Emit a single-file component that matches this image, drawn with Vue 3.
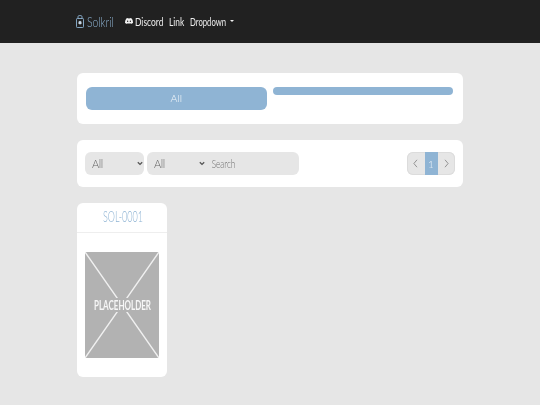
<script setup>
const chevron = "url(\"data:image/svg+xml,%3Csvg xmlns='http://www.w3.org/2000/svg' width='6' height='5' viewBox='0 0 6 5'%3E%3Cpath d='M.8 1.200 3 3.400l2.200-2.200' fill='none' stroke='%23555' stroke-width='1.300'/%3E%3C/svg%3E\")"
</script>

<template>
  <div class="page">
    <header class="nav">
      <a class="brand">
        <svg class="brand-icon" width="8" height="13" viewBox="0 0 8 13">
          <path d="M2 3.500V1.700C2 1 2.500.6 3.100.6h1.800C5.500.6 6 1 6 1.700v1.800" fill="none" stroke="#8fb4d4" stroke-width=".9"/>
          <rect x=".5" y="3.500" width="7" height="9" rx=".8" fill="none" stroke="#8fb4d4" stroke-width=".9"/>
          <path d="M4 5.800l1.500 1v1.400L4 9.700 2.500 8.200V6.800z" fill="#c8d8e6"/>
        </svg>
        <span class="squeeze brand-text">Solkril</span>
      </a>
      <a class="link discord">
        <svg width="8" height="6" viewBox="0 0 16 12">
          <path fill="#f2f2f2" d="M13.500 1A13 13 0 0 0 10.300 0l-.4.800a12 12 0 0 0-3.800 0L5.700 0A13 13 0 0 0 2.500 1C.4 4-.2 7 .1 10a13 13 0 0 0 4 2l.8-1.300-1.300-.6.300-.2a9.300 9.300 0 0 0 8.200 0l.3.200-1.300.6.800 1.300a13 13 0 0 0 4-2c.4-3.500-.6-6.500-2.400-9zM5.300 8.200c-.8 0-1.400-.7-1.400-1.600S4.500 5 5.300 5s1.500.7 1.400 1.600c0 .9-.6 1.600-1.400 1.600zm5.400 0c-.8 0-1.400-.7-1.400-1.600S9.900 5 10.700 5s1.500.7 1.400 1.600c0 .9-.6 1.600-1.400 1.600z"/>
        </svg>
        <span class="squeeze w-discord">Discord</span>
      </a>
      <a class="link"><span class="squeeze w-link">Link</span></a>
      <a class="link dropdown"><span class="squeeze w-drop">Dropdown</span><i class="caret"></i></a>
    </header>

    <main class="content">
      <section class="card tabs">
        <button class="tab tab-all">All</button>
        <button class="tab tab-empty"></button>
      </section>

      <section class="card filters">
        <select class="field sel sel-a" :style="{ backgroundImage: chevron }"><option>All</option></select>
        <div class="group">
          <select class="field sel sel-b" :style="{ backgroundImage: chevron }"><option>All</option></select>
          <div class="search-wrap">
            <input class="search" placeholder="Search" />
          </div>
        </div>
        <nav class="pager">
          <span class="pg">
            <svg width="5" height="9" viewBox="0 0 5 9"><path d="M4 .8.900 4.500 4 8.200" fill="none" stroke="#8a8a8a" stroke-width=".9"/></svg>
          </span>
          <span class="pg current">1</span>
          <span class="pg">
            <svg width="5" height="9" viewBox="0 0 5 9"><path d="M1 .8l3.100 3.700L1 8.200" fill="none" stroke="#8a8a8a" stroke-width=".9"/></svg>
          </span>
        </nav>
      </section>

      <article class="card item">
        <h3 class="item-title"><span class="squeeze w-title">SOL-0001</span></h3>
        <div class="item-body">
          <div class="ph">
            <svg class="ph-x" viewBox="0 0 74 106" preserveAspectRatio="none">
              <path d="M0 0L74 106M74 0L0 106" stroke="#f0f0f0" stroke-width="1.400" fill="none"/>
            </svg>
            <div class="ph-band"><span class="squeeze w-ph">PLACEHOLDER</span></div>
          </div>
        </div>
      </article>
    </main>
  </div>
</template>

<style>
html, body { margin: 0; overflow: hidden; background: #e6e6e6; }
</style>

<style scoped>
.page {
  width: 540px;
  height: 405px;
  background: #e6e6e6;
  font-family: "Lato", "Open Sans", sans-serif;
  font-weight: 300;
  overflow: hidden;
  filter: blur(.35px);
}
.squeeze {
  display: inline-block;
  white-space: nowrap;
  transform-origin: left center;
}
.nav {
  height: 43px;
  box-sizing: border-box;
  background: #212121;
  display: flex;
  align-items: center;
  padding: 0 0 1px 76px;
  color: #ededed;
  font-size: 11px;
  font-weight: 400;
}
.brand {
  display: flex;
  align-items: center;
  gap: 3px;
  color: #8fb4d4;
  margin-right: 11px;
}
.brand-text { width: 27px; font-size: 14px; font-weight: 300; transform: scaleX(.74); }
.link { margin-right: 7px; }
.discord { display: flex; align-items: center; gap: 2px; }
.w-discord { width: 27px; transform: scaleX(.77); }
.w-link { width: 14px; transform: scaleX(.76); }
.w-drop { width: 36px; transform: scaleX(.7); }
.dropdown { display: flex; align-items: center; }
.caret {
  width: 0;
  height: 0;
  margin-left: 4px;
  border-left: 2px solid transparent;
  border-right: 2px solid transparent;
  border-top: 2px solid #f0f0f0;
}
.content {
  width: 386px;
  margin-left: 77px;
  padding-top: 30px;
  display: flex;
  flex-direction: column;
  gap: 16px;
}
.card {
  background: #fff;
  border-radius: 6px;
  box-sizing: border-box;
}
.tabs {
  height: 51px;
  padding: 14px 10px 0 9px;
  display: flex;
  align-items: flex-start;
  gap: 6px;
}
.tab {
  flex: 1;
  border: 0;
  padding: 0 0 2px;
  background: #8fb4d4;
  color: #f4f8fb;
  font: inherit;
  font-size: 10.500px;
  border-radius: 6px;
}
.tab-all { height: 23px; }
.tab-empty { height: 8px; border-radius: 4px; padding: 0; }
.filters {
  height: 47px;
  padding: 0 8px;
  display: flex;
  align-items: center;
}
.field {
  box-sizing: border-box;
  height: 23px;
  border: 0;
  outline: 0;
  background: #e6e6e6;
  color: #666;
  font: inherit;
  font-size: 11px;
}
.sel {
  appearance: none;
  background-repeat: no-repeat;
  letter-spacing: -.4px;
}
.sel-a {
  width: 59px;
  padding-left: 7px;
  border-radius: 6px;
  margin-right: 3px;
  background-position: right 1px center;
}
.group { display: flex; }
.sel-b {
  width: 60px;
  padding-left: 7px;
  border-radius: 6px 0 0 6px;
  background-position: right 2px center;
}
.search-wrap {
  width: 92px;
  height: 23px;
  background: #e6e6e6;
  border-radius: 0 6px 6px 0;
  overflow: hidden;
}
.search {
  box-sizing: border-box;
  width: 135px;
  height: 23px;
  padding: 0 0 0 7px;
  border: 0;
  outline: 0;
  background: transparent;
  font: inherit;
  font-size: 12px;
  color: #6e6e6e;
  transform-origin: left center;
  transform: scaleX(.68);
}
.search::placeholder { color: #6e6e6e; opacity: 1; }
.pager {
  margin-left: auto;
  display: flex;
  height: 23px;
  width: 48px;
  border-radius: 6px;
  overflow: hidden;
  background: #e6e6e6;
  box-shadow: inset 0 0 0 1px #dcdcdc;
}
.pg {
  flex: 1;
  display: flex;
  align-items: center;
  justify-content: center;
  font-size: 10px;
}
.pg.current {
  flex: none;
  width: 13px;
  background: #8fb4d4;
  color: #eef4f9;
}
.item {
  width: 90px;
  height: 174px;
}
.item-title {
  margin: 0;
  height: 30px;
  padding-left: 26px;
  line-height: 26px;
  box-sizing: border-box;
  border-bottom: 1px solid #eeeeee;
  font-size: 15px;
  font-weight: 300;
  color: #8fb4d4;
}
.w-title { width: 39px; transform: scaleX(.6); }
.item-body { padding: 19px 8px 0; }
.ph {
  position: relative;
  width: 74px;
  height: 106px;
  background: #b2b2b2;
  display: flex;
  align-items: center;
  justify-content: center;
}
.ph-x {
  position: absolute;
  inset: 0;
  width: 100%;
  height: 100%;
}
.ph-band {
  position: relative;
  width: 100%;
  height: 14px;
  padding-left: 9px;
  box-sizing: border-box;
  background: #b2b2b2;
  color: #f6f6f6;
  font-size: 12.500px;
  font-weight: 700;
  line-height: 15px;
}
.w-ph { width: 56px; transform: scaleX(.64); }
</style>
